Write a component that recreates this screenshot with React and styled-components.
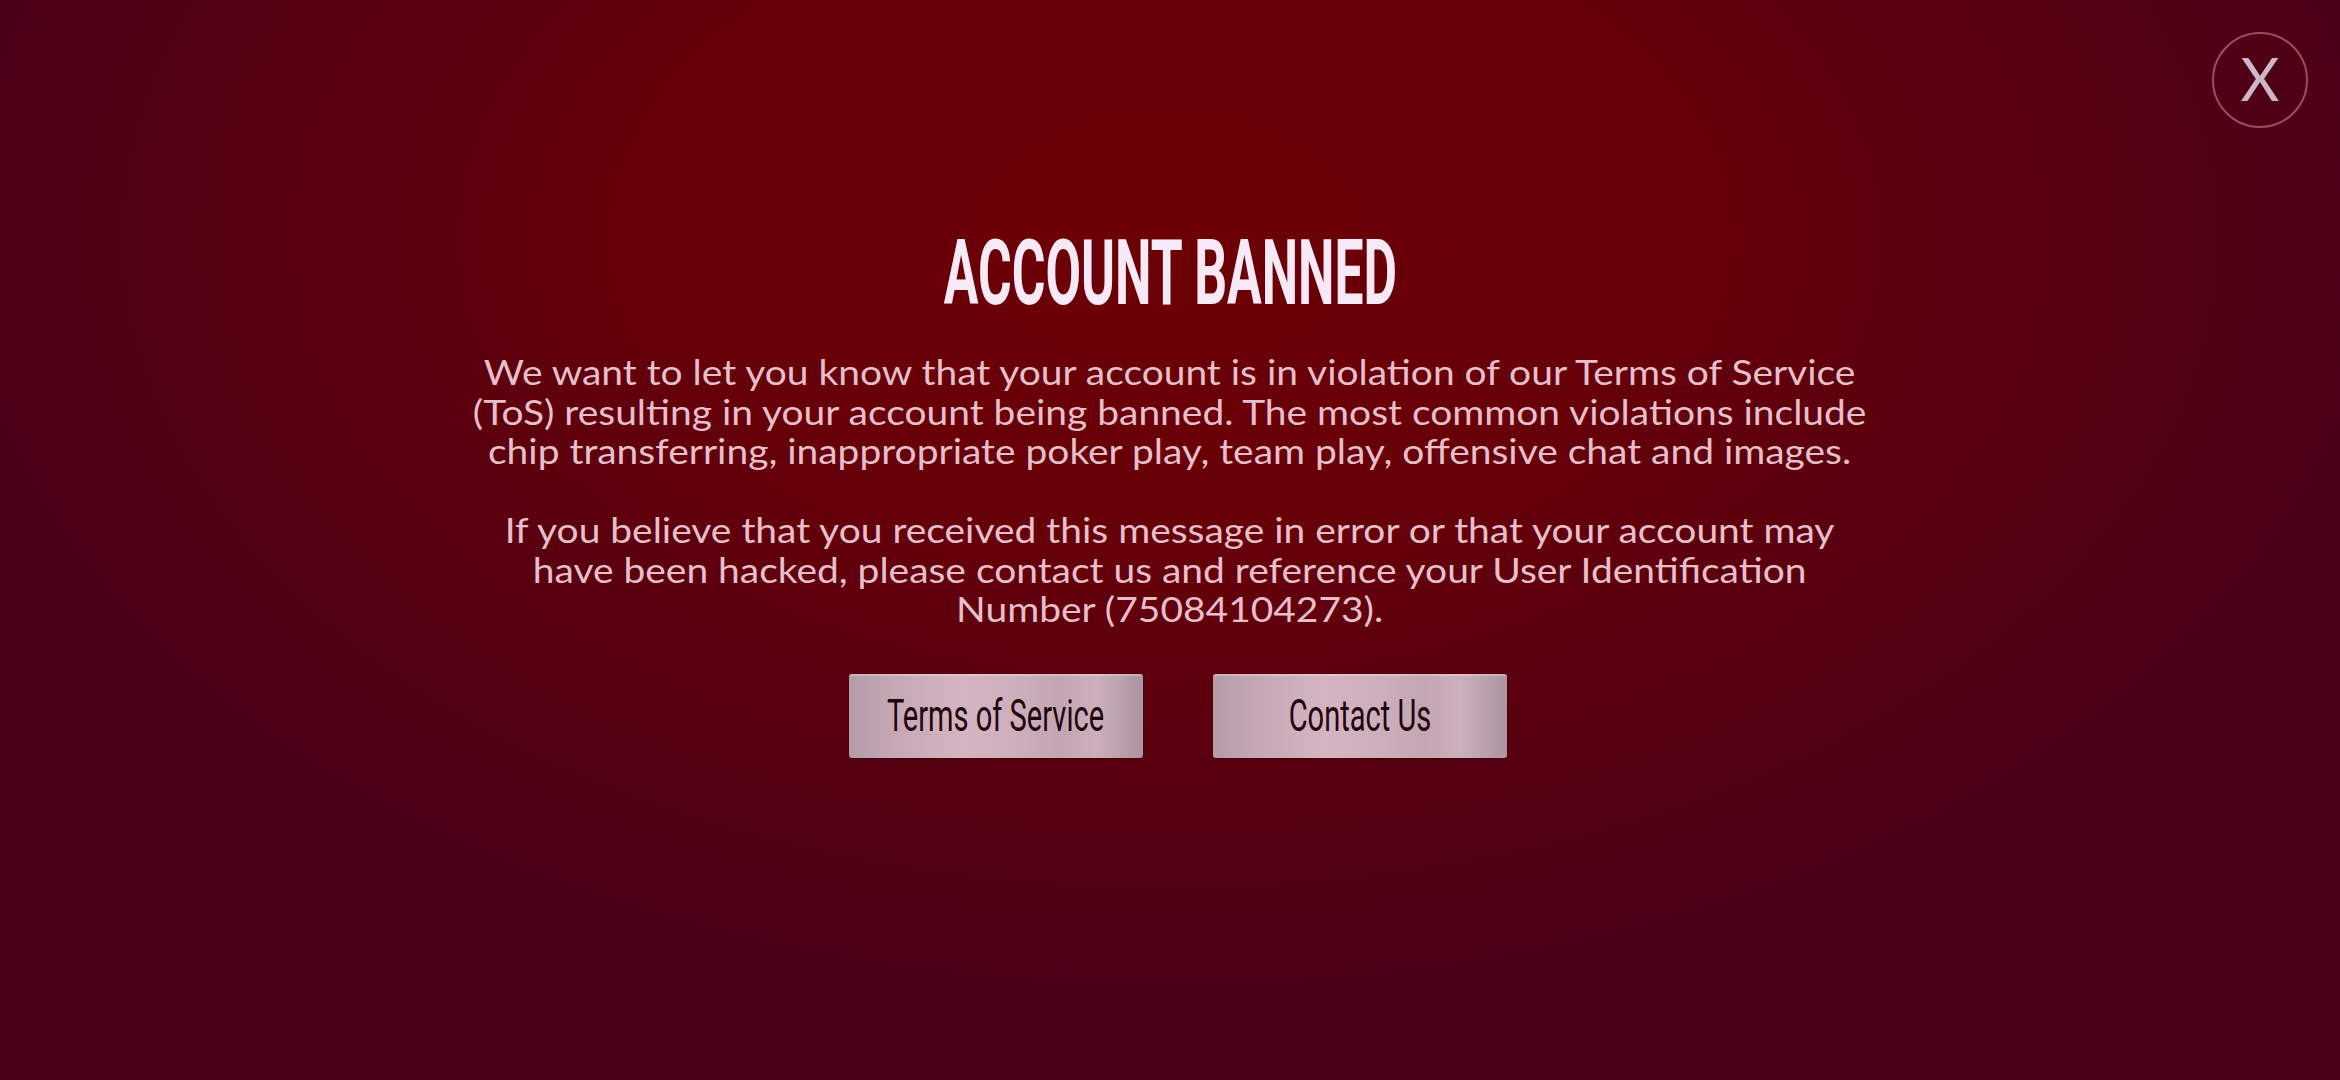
import React from 'react';
import styled, { createGlobalStyle } from 'styled-components';

const GlobalStyle = createGlobalStyle`
   html, body {
      margin: 0;
      padding: 0;
      height: 100%;
   }
   body {
      font-family: Lato, "Noto Sans", sans-serif;
      background: #4b0016;
   }
`;

const Screen = styled.div`
   position: relative;
   width: 100vw;
   height: 100vh;
   overflow: hidden;
   display: flex;
   flex-direction: column;
   align-items: center;
   padding-top: 229px;
   box-sizing: border-box;
   background:
      radial-gradient(ellipse 52% 70% at 50% 22%, #6c0006 0%, #680008 35%, #5c000e 62%, #4c0016 100%);
`;

const CloseButton = styled.button`
   position: absolute;
   top: 32px;
   right: 32px;
   width: 96px;
   height: 96px;
   border-radius: 50%;
   border: 2px solid rgba(215, 140, 170, 0.55);
   background: transparent;
   color: #cdb6c8;
   font-family: Lato, sans-serif;
   font-weight: 400;
   font-size: 60px;
   line-height: 1;
   padding: 0 0 4px 0;
   display: flex;
   align-items: center;
   justify-content: center;
   cursor: pointer;
`;

const Title = styled.h1`
   margin: 0;
   height: 90px;
   font-family: Roboto, "Liberation Sans", sans-serif;
   font-weight: 700;
   font-size: 90px;
   line-height: 90px;
   color: #f7e9f6;
   white-space: nowrap;
   transform: scaleX(0.573);
`;

const Message = styled.div`
   margin-top: 33px;
   display: flex;
   flex-direction: column;
   align-items: center;
   gap: 39.5px;
   text-align: center;
   color: #e6bfcb;
   font-size: 34px;
   line-height: 39.5px;
`;

const Paragraph = styled.p`
   margin: 0;
   white-space: nowrap;
   transform: scaleX(1.145);
`;

const ButtonRow = styled.div`
   margin-top: 45px;
   margin-left: 15px;
   display: flex;
   gap: 70px;
`;

const MetalButton = styled.button`
   width: 294px;
   height: 84px;
   border: none;
   border-radius: 3px;
   padding: 0;
   display: flex;
   align-items: center;
   justify-content: center;
   background: linear-gradient(90deg, #b49ca7 0%, #c6a9b6 16%, #d4b4c1 38%, #cdaebb 58%, #c3a6b2 72%, #ccb1bc 84%, #ab949e 100%);
   box-shadow: inset 0 2px 0 rgba(255, 235, 242, 0.3), 0 1px 2px rgba(0, 0, 0, 0.25);
   cursor: pointer;
`;

const ButtonLabel = styled.span`
   display: inline-block;
   font-family: Roboto, "Liberation Sans", sans-serif;
   font-size: 44px;
   font-weight: 400;
   color: #22060f;
   white-space: nowrap;
   transform: scaleX(0.66);
`;

export default function App() {
   return (
      <>
         <GlobalStyle />
         <Screen>
            <CloseButton aria-label="close">X</CloseButton>
            <Title>ACCOUNT BANNED</Title>
            <Message>
               <Paragraph>
                  We want to let you know that your account is in violation of our Terms of Service<br />
                  (ToS) resulting in your account being banned. The most common violations include<br />
                  chip transferring, inappropriate poker play, team play, offensive chat and images.
               </Paragraph>
               <Paragraph>
                  If you believe that you received this message in error or that your account may<br />
                  have been hacked, please contact us and reference your User Identification<br />
                  Number (75084104273).
               </Paragraph>
            </Message>
            <ButtonRow>
               <MetalButton>
                  <ButtonLabel>Terms of Service</ButtonLabel>
               </MetalButton>
               <MetalButton>
                  <ButtonLabel>Contact Us</ButtonLabel>
               </MetalButton>
            </ButtonRow>
         </Screen>
      </>
   );
}
